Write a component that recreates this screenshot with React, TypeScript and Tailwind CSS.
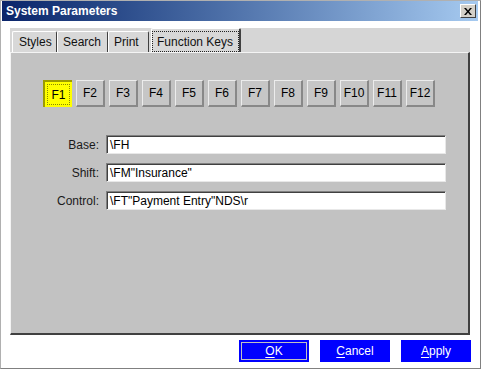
import React from "react";

const keys = ["F1", "F2", "F3", "F4", "F5", "F6", "F7", "F8", "F9", "F10", "F11", "F12"];

function Field({ label, value }: { label: string; value: string }) {
  return (
    <div className="flex items-center h-[19px]">
      <div className="w-[89px] text-right pr-[1px] text-[#1a1a1a]">{label}</div>
      <div className="ml-[6px] w-[340px] h-[19px] bg-white border-t border-l border-[#808080] border-r border-b border-r-[#e8e8e8] border-b-[#e8e8e8] flex">
        <div className="flex-1 border-t border-l border-[#404040] flex items-center pl-[2px] text-black leading-none">
          {value}
        </div>
      </div>
    </div>
  );
}

function BlueButton({ first, rest, focused }: { first: string; rest: string; focused?: boolean }) {
  return (
    <div className="w-[70px] h-[22px] bg-[#0000ff] p-[2px]">
      <div
        className={
          "w-full h-full flex items-center justify-center text-white leading-none " +
          (focused ? "border border-[#c0c0c0]" : "")
        }
      >
        <span>
          <span className="underline underline-offset-[2px]">{first}</span>
          {rest}
        </span>
      </div>
    </div>
  );
}

export default function App() {
  return (
    <div className="w-[481px] h-[369px] bg-white border border-[#b0b0b0] border-r-[#808080] border-b-[#808080] flex flex-col font-['Liberation_Sans',Arial,sans-serif] text-[12px] overflow-hidden">
      {/* Title bar */}
      <div className="ml-[1px] mr-[2px] h-[20px] bg-gradient-to-r from-[#0a246a] to-[#a6caf0] flex items-center justify-between pl-[4px] pr-[2px]">
        <span className="text-white font-bold text-[12px] leading-none">System Parameters</span>
        <div className="w-[16px] h-[14px] bg-[#d4d0c8] border-t border-l border-white border-r border-b border-r-[#404040] border-b-[#404040] flex items-center justify-center">
          <svg width="8" height="7" viewBox="0 0 8 7">
            <path d="M0 0h2l2 2.5L6 0h2L5 3.5 8 7H6L4 4.5 2 7H0l3-3.5z" fill="#000" />
          </svg>
        </div>
      </div>

      {/* Tabs + panel */}
      <div className="mt-[7px] ml-[9px] w-[460px] flex flex-col">
        <div className="h-[24px] bg-[#d6d6d6] flex items-end pl-[2px]">
          <div className="w-[45px] h-[21px] bg-[#d8d8d8] border-t border-l border-white border-r border-r-[#404040] rounded-t-[2px] flex items-center pl-[6px] text-[#111]">
            Styles
          </div>
          <div className="w-[51px] h-[21px] bg-[#d8d8d8] border-t border-l border-white border-r border-r-[#404040] rounded-t-[2px] flex items-center pl-[5px] text-[#111]">
            Search
          </div>
          <div className="w-[41px] h-[21px] bg-[#d8d8d8] border-t border-l border-white border-r border-r-[#404040] rounded-t-[2px] flex items-center pl-[5px] text-[#111]">
            Print
          </div>
          <div className="ml-[2px] w-[90px] h-[24px] bg-[#d8d8d8] border-t border-l border-white border-r-2 border-r-[#404040] rounded-t-[2px] pt-[2px] flex">
            <div className="flex-1 border border-dotted border-[#222] flex items-center pl-[4px] text-[#111]">
              Function Keys
            </div>
          </div>
        </div>
        <div className="h-[283px] bg-[#c2c2c2] border-t border-l border-[#f4f4f4] border-r-2 border-b-2 border-r-[#404040] border-b-[#404040] flex flex-col">
          <div className="mt-[27px] ml-[32px] flex gap-[4px]">
            {keys.map((k, i) =>
              i === 0 ? (
                <div
                  key={k}
                  className="w-[29px] h-[27px] bg-[#ffff00] border-t-2 border-l-2 border-[#9c9c00] p-[2px] flex"
                >
                  <div className="flex-1 border border-dotted border-[#8a8a00] flex items-center justify-center text-black leading-none text-[12px]">
                    {k}
                  </div>
                </div>
              ) : (
                <div
                  key={k}
                  className="w-[29px] h-[27px] bg-[#c6c6c6] border-t border-l border-[#ececec] border-r-2 border-b-2 border-r-[#888] border-b-[#888] flex items-center justify-center text-black leading-none text-[12px]"
                >
                  {k}
                </div>
              )
            )}
          </div>
          <div className="mt-[28px] flex flex-col gap-[9px]">
            <Field label="Base:" value={"\\FH"} />
            <Field label="Shift:" value={'\\FM"Insurance"'} />
            <Field label="Control:" value={'\\FT"Payment Entry"NDS\\r'} />
          </div>
        </div>
      </div>

      {/* Buttons */}
      <div className="mt-[5px] mr-[9px] flex justify-end gap-[11px]">
        <BlueButton first="O" rest="K" focused />
        <BlueButton first="C" rest="ancel" />
        <BlueButton first="A" rest="pply" />
      </div>
    </div>
  );
}
